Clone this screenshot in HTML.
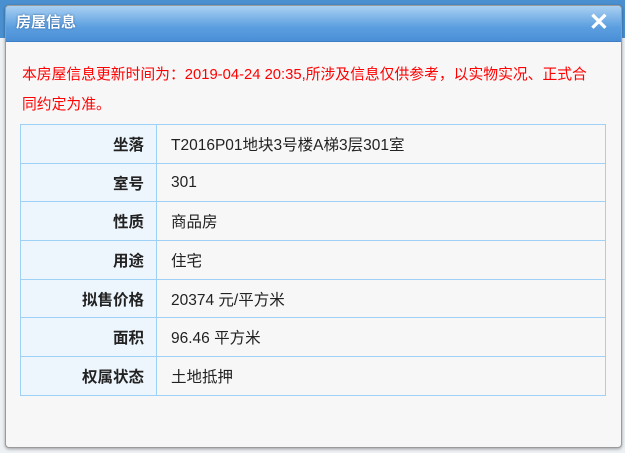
<!DOCTYPE html>
<html><head><meta charset="utf-8"><style>
body{margin:0;width:625px;height:453px;overflow:hidden;background:#eef1f4;font-family:"Liberation Sans","Noto Sans CJK SC",sans-serif;position:relative}
.top{position:absolute;left:0;top:0;width:625px;height:38px;background:#4a90d0}
.dlg{position:absolute;left:5px;top:5px;width:615px;height:441px;background:#f7f7f7;border:1px solid #9a9a9a;border-radius:4px;box-shadow:0 1px 3px rgba(0,0,0,.35);overflow:hidden}
.hd{height:35px;background:linear-gradient(#a9d0f2,#5c9fe0 60%,#4a8fd6);border-bottom:1px solid #3f7fc5;color:#fff;font-size:15px;font-weight:bold;line-height:34px;padding-left:10px;text-shadow:0 0 2px #2a5c99}
.x{position:absolute;right:12px;top:3px;color:#fff;font-size:24px;font-weight:bold;line-height:28px}
.msg{position:absolute;left:16px;top:54px;width:600px;white-space:nowrap;color:#f00;font-size:14.8px;line-height:30px}
table{position:absolute;left:14px;top:118px;width:586px;border-collapse:collapse}
td{border:1.5px solid #9fd0f5;height:37.7px;font-size:15.5px;color:#222;padding:0}
td.l{width:136px;background:#eef6fd;text-align:right;font-weight:bold;padding-right:12px;box-sizing:border-box}
td.v{padding-left:14px;background:#f7f7f7}
</style></head><body>
<div class="top"></div>
<div class="dlg">
<div class="hd">房屋信息</div><div class="x">✕</div>
<div class="msg">本房屋信息更新时间为：2019-04-24 20:35,所涉及信息仅供参考，以实物实况、正式合<br>同约定为准。</div>
<table>
<tr><td class="l">坐落</td><td class="v">T2016P01地块3号楼A梯3层301室</td></tr>
<tr><td class="l">室号</td><td class="v">301</td></tr>
<tr><td class="l">性质</td><td class="v">商品房</td></tr>
<tr><td class="l">用途</td><td class="v">住宅</td></tr>
<tr><td class="l">拟售价格</td><td class="v">20374 元/平方米</td></tr>
<tr><td class="l">面积</td><td class="v">96.46 平方米</td></tr>
<tr><td class="l">权属状态</td><td class="v">土地抵押</td></tr>
</table>
</div>
</body></html>
